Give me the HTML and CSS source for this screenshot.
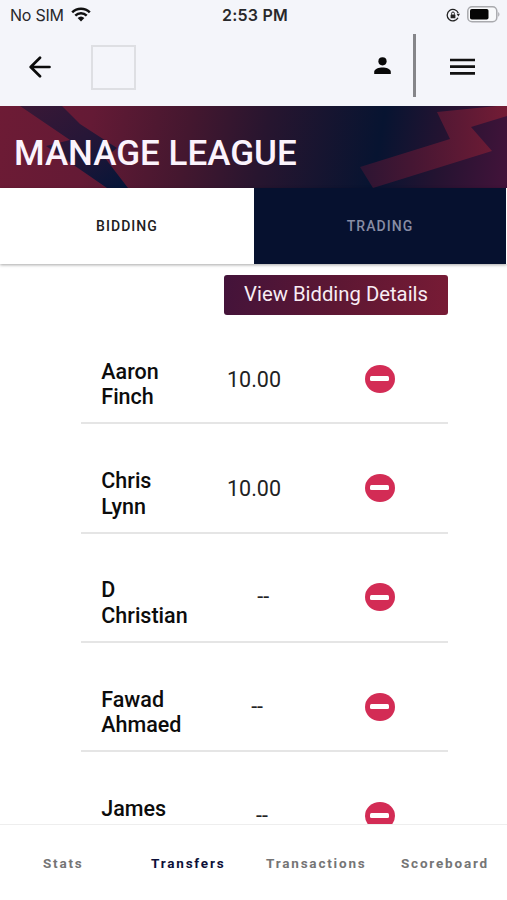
FILE: index.html
```
<!DOCTYPE html>
<html lang="en">
<head>
  <meta charset="UTF-8" />
  <meta name="viewport" content="width=device-width, initial-scale=1.0"/>
  <title>Manage League</title>
  <link rel="stylesheet" href="styles.css">
</head>
<body>
  <div class="app">
    <div class="status-bar">
      <div class="carrier">
        <span>No SIM</span>
        <svg class="wifi" viewBox="0 0 20 15">
          <path d="M1.2 5.3a12.6 12.6 0 0 1 17.6 0M4.3 8.6a8.2 8.2 0 0 1 11.4 0" fill="none" stroke="#111" stroke-width="2.5"/>
          <path d="M6.6 11.1a5 5 0 0 1 6.8 0L10 14.5z" fill="#111"/>
        </svg>
      </div>
      <div class="time">2:53 PM</div>
      <div class="indicators">
        <svg class="lock" viewBox="0 0 14 14">
          <path d="M12.2 5.1A5.7 5.7 0 1 0 12 9.7" fill="none" stroke="#222" stroke-width="1.3"/>
          <path d="M10.6 5.8h3.4l-1.7 2.6z" fill="#222"/>
          <rect x="4.6" y="6.5" width="4.8" height="3.7" rx=".5" fill="#222"/>
          <path d="M5.6 6.7V5.4a1.4 1.4 0 0 1 2.8 0v1.3" fill="none" stroke="#222"/>
        </svg>
        <svg class="battery" viewBox="0 0 33 17">
          <rect x=".8" y=".8" width="29" height="15" rx="4.3" fill="#f8f9fb" stroke="#a9aaae" stroke-width="1.5"/>
          <rect x="3" y="3" width="18.5" height="10.5" rx="1.8" fill="#050505"/>
          <path d="M31.2 6c1.7.8 1.7 4 0 4.8z" fill="#a9aaae"/>
        </svg>
      </div>
    </div>

    <header class="header">
      <button class="icon-btn back-btn" aria-label="Back">
        <svg viewBox="0 0 24 22">
          <path d="M21.5 11H3M12 1.7L2.7 11l9.3 9.3" fill="none" stroke="#0b0b0b" stroke-width="2.7" stroke-linecap="round" stroke-linejoin="round"/>
        </svg>
      </button>
      <div class="logo"></div>
      <button class="icon-btn profile-btn" aria-label="Profile">
        <svg viewBox="0 0 17 17">
          <circle cx="8.5" cy="4.3" r="4.1" fill="#080808"/>
          <path d="M.2 17v-2.2c0-2.8 4.8-4.3 8.3-4.3s8.3 1.5 8.3 4.3V17z" fill="#080808"/>
        </svg>
      </button>
      <div class="divider"></div>
      <button class="icon-btn menu-btn" aria-label="Menu">
        <svg viewBox="0 0 25 18">
          <path d="M0 2h25M0 8.7h25M0 15.4h25" stroke="#111" stroke-width="2.7"/>
        </svg>
      </button>
    </header>

    <div class="banner">
      <svg class="banner-art" viewBox="0 0 507 82" preserveAspectRatio="none">
        <defs>
          <linearGradient id="streak" x1="0" y1="0" x2="1" y2="1">
            <stop offset="0" stop-color="#3a1836"/>
            <stop offset=".5" stop-color="#261637"/>
            <stop offset="1" stop-color="#041538"/>
          </linearGradient>
          <linearGradient id="bolt" x1="0" y1="0" x2="1" y2="0">
            <stop offset="0" stop-color="#2c1533"/>
            <stop offset=".35" stop-color="#451633"/>
            <stop offset="1" stop-color="#731c35"/>
          </linearGradient>
        </defs>
        <path d="M20 0H62L80 18 117 42 105 52 128 82H107L46 40 70 34z" fill="url(#streak)"/>
        <path d="M437 6L507-1V10L471 21 492 45 373 82 360 61 450 33z" fill="url(#bolt)"/>
      </svg>
      <h1>MANAGE LEAGUE</h1>
    </div>

    <div class="tabs">
      <button class="tab active">BIDDING</button>
      <button class="tab">TRADING</button>
    </div>

    <main class="content">
      <button class="details-btn">View Bidding Details</button>
      <ul class="players" id="players"></ul>
    </main>

    <nav class="bottom-nav">
      <a class="stats">Stats</a>
      <a class="transfers active">Transfers</a>
      <a class="transactions">Transactions</a>
      <a class="scoreboard">Scoreboard</a>
    </nav>
  </div>

  <script>
    const players = [
      { name: ['Aaron', 'Finch'], bid: '10.00' },
      { name: ['Chris', 'Lynn'], bid: '10.00' },
      { name: ['D', 'Christian'], bid: '--' },
      { name: ['Fawad', 'Ahmaed'], bid: '--' },
      { name: ['James'], bid: '--', wide: true }
    ];

    const list = document.getElementById('players');
    players.forEach(p => {
      const row = document.createElement('li');
      row.className = 'player';
      row.innerHTML = `
        <div class="name${p.wide ? ' wide' : ''}">${p.name.join('<br>')}</div>
        <div class="bid${p.bid === '--' ? ' empty' : ''}">${p.bid}</div>
        <button class="remove-btn" aria-label="Remove"><span></span></button>`;
      list.appendChild(row);
    });
  </script>
</body>
</html>
```

FILE: styles.css
```
:root {
  --navy: #06112f;
  --header-bg: #f4f5fa;
  --remove: #d32c55;
  --line: #e5e5e5;
}

* {
  box-sizing: border-box;
}

body {
  margin: 0;
  font-family: Roboto, sans-serif;
  background: #fff;
  color: #0c0c0c;
}

button {
  font-family: inherit;
  border: none;
  padding: 0;
  background: none;
  cursor: pointer;
}

svg {
  display: block;
}

.app {
  display: flex;
  flex-direction: column;
  height: 900px;
  overflow: hidden;
}

/* Status bar */
.status-bar {
  height: 30px;
  flex: none;
  display: grid;
  grid-template-columns: 1fr auto 1fr;
  align-items: center;
  padding: 0 7px 1px 10px;
  background: var(--header-bg);
  font-family: Inter, sans-serif;
  font-size: 16px;
  color: #28282b;
}

.carrier {
  display: flex;
  align-items: center;
  gap: 7px;
  letter-spacing: -0.25px;
}

.wifi {
  width: 20px;
  height: 15px;
}

.time {
  font-weight: 600;
  letter-spacing: 0.25px;
}

.indicators {
  display: flex;
  justify-content: flex-end;
  align-items: center;
  gap: 7px;
}

.lock {
  width: 14px;
  height: 14px;
}

.battery {
  width: 33px;
  height: 17px;
}

/* Header */
.header {
  height: 76px;
  flex: none;
  display: flex;
  align-items: center;
  padding: 0 32px 2px 28px;
  background: var(--header-bg);
}

.back-btn svg {
  width: 24px;
  height: 22px;
}

.logo {
  width: 45px;
  height: 45px;
  margin-left: 39px;
  border: 2px solid #dedfe3;
}

.profile-btn {
  margin-left: auto;
}

.profile-btn svg {
  width: 17px;
  height: 17px;
  margin-bottom: 3px;
}

.divider {
  width: 3px;
  height: 63px;
  margin: 0 34px 4px 22px;
  background: #858589;
}

.menu-btn svg {
  width: 25px;
  height: 18px;
}

/* Banner */
.banner {
  position: relative;
  height: 82px;
  flex: none;
  padding: 27px 0 0 14px;
  background: linear-gradient(100deg, #6d1b35 0%, #641a35 18%, #44172f 37%, #27152f 52%, #071431 74%, #241331 86%, #43133a 100%);
}

.banner-art {
  position: absolute;
  inset: 0;
  width: 100%;
  height: 100%;
}

h1 {
  position: relative;
  margin: 0;
  font-size: 35px;
  line-height: 41px;
  font-weight: 500;
  color: #fbf3fc;
}

/* Tabs */
.tabs {
  position: relative;
  display: flex;
  height: 76px;
  flex: none;
  padding-right: 1px;
  background: #fff;
  box-shadow: 0 1px 3px rgba(0,0,0,0.35);
}

.tab {
  width: 252px;
  background: var(--navy);
  color: #888da4;
  font-size: 14px;
  font-weight: 500;
  letter-spacing: 1.05px;
}

.tab.active {
  width: 254px;
  background: #fff;
  color: #202020;
}

/* Player list */
.content {
  flex: 1;
  min-height: 0;
  overflow: hidden;
  padding: 11px 59px 0 81px;
}

.details-btn {
  display: block;
  width: 224px;
  height: 40px;
  margin-left: auto;
  padding-bottom: 3px;
  border-radius: 3px;
  background: linear-gradient(100deg, #43133a, #5d1733 50%, #781b35);
  color: #f8edf4;
  font-size: 20.3px;
}

.players {
  list-style: none;
  margin: 0;
  padding: 0;
}

.player {
  display: flex;
  height: 109.3px;
  padding: 43.7px 53.5px 0 20.3px;
  border-bottom: 2px solid var(--line);
}

.name {
  min-width: 58px;
  margin-right: 67.7px;
  font-size: 21.5px;
  line-height: 25.6px;
  font-weight: 500;
}

.name.wide {
  min-width: 85px;
}

.bid {
  margin-top: 8px;
  font-size: 21.5px;
  line-height: 26px;
  color: #222;
}

.bid.empty {
  margin: 7px 0 0 2px;
}

.remove-btn {
  display: flex;
  align-items: center;
  justify-content: center;
  width: 30px;
  height: 28px;
  margin: 6px 0 0 auto;
  border-radius: 50%;
  background: var(--remove);
}

.remove-btn span {
  width: 19px;
  height: 5px;
  border-radius: 1.5px;
  background: #fff;
}

/* Bottom nav */
.bottom-nav {
  display: flex;
  height: 76px;
  flex: none;
  padding: 30px 0 0 43px;
  border-top: 1px solid #eee;
  background: #fff;
  font-size: 13.5px;
  line-height: 16px;
  font-weight: 700;
  letter-spacing: 1.8px;
  color: #757575;
}

.stats {
  width: 108px;
}

.transfers {
  width: 115px;
}

.transactions {
  width: 135px;
}

.bottom-nav .active {
  color: #0c1038;
}
```
